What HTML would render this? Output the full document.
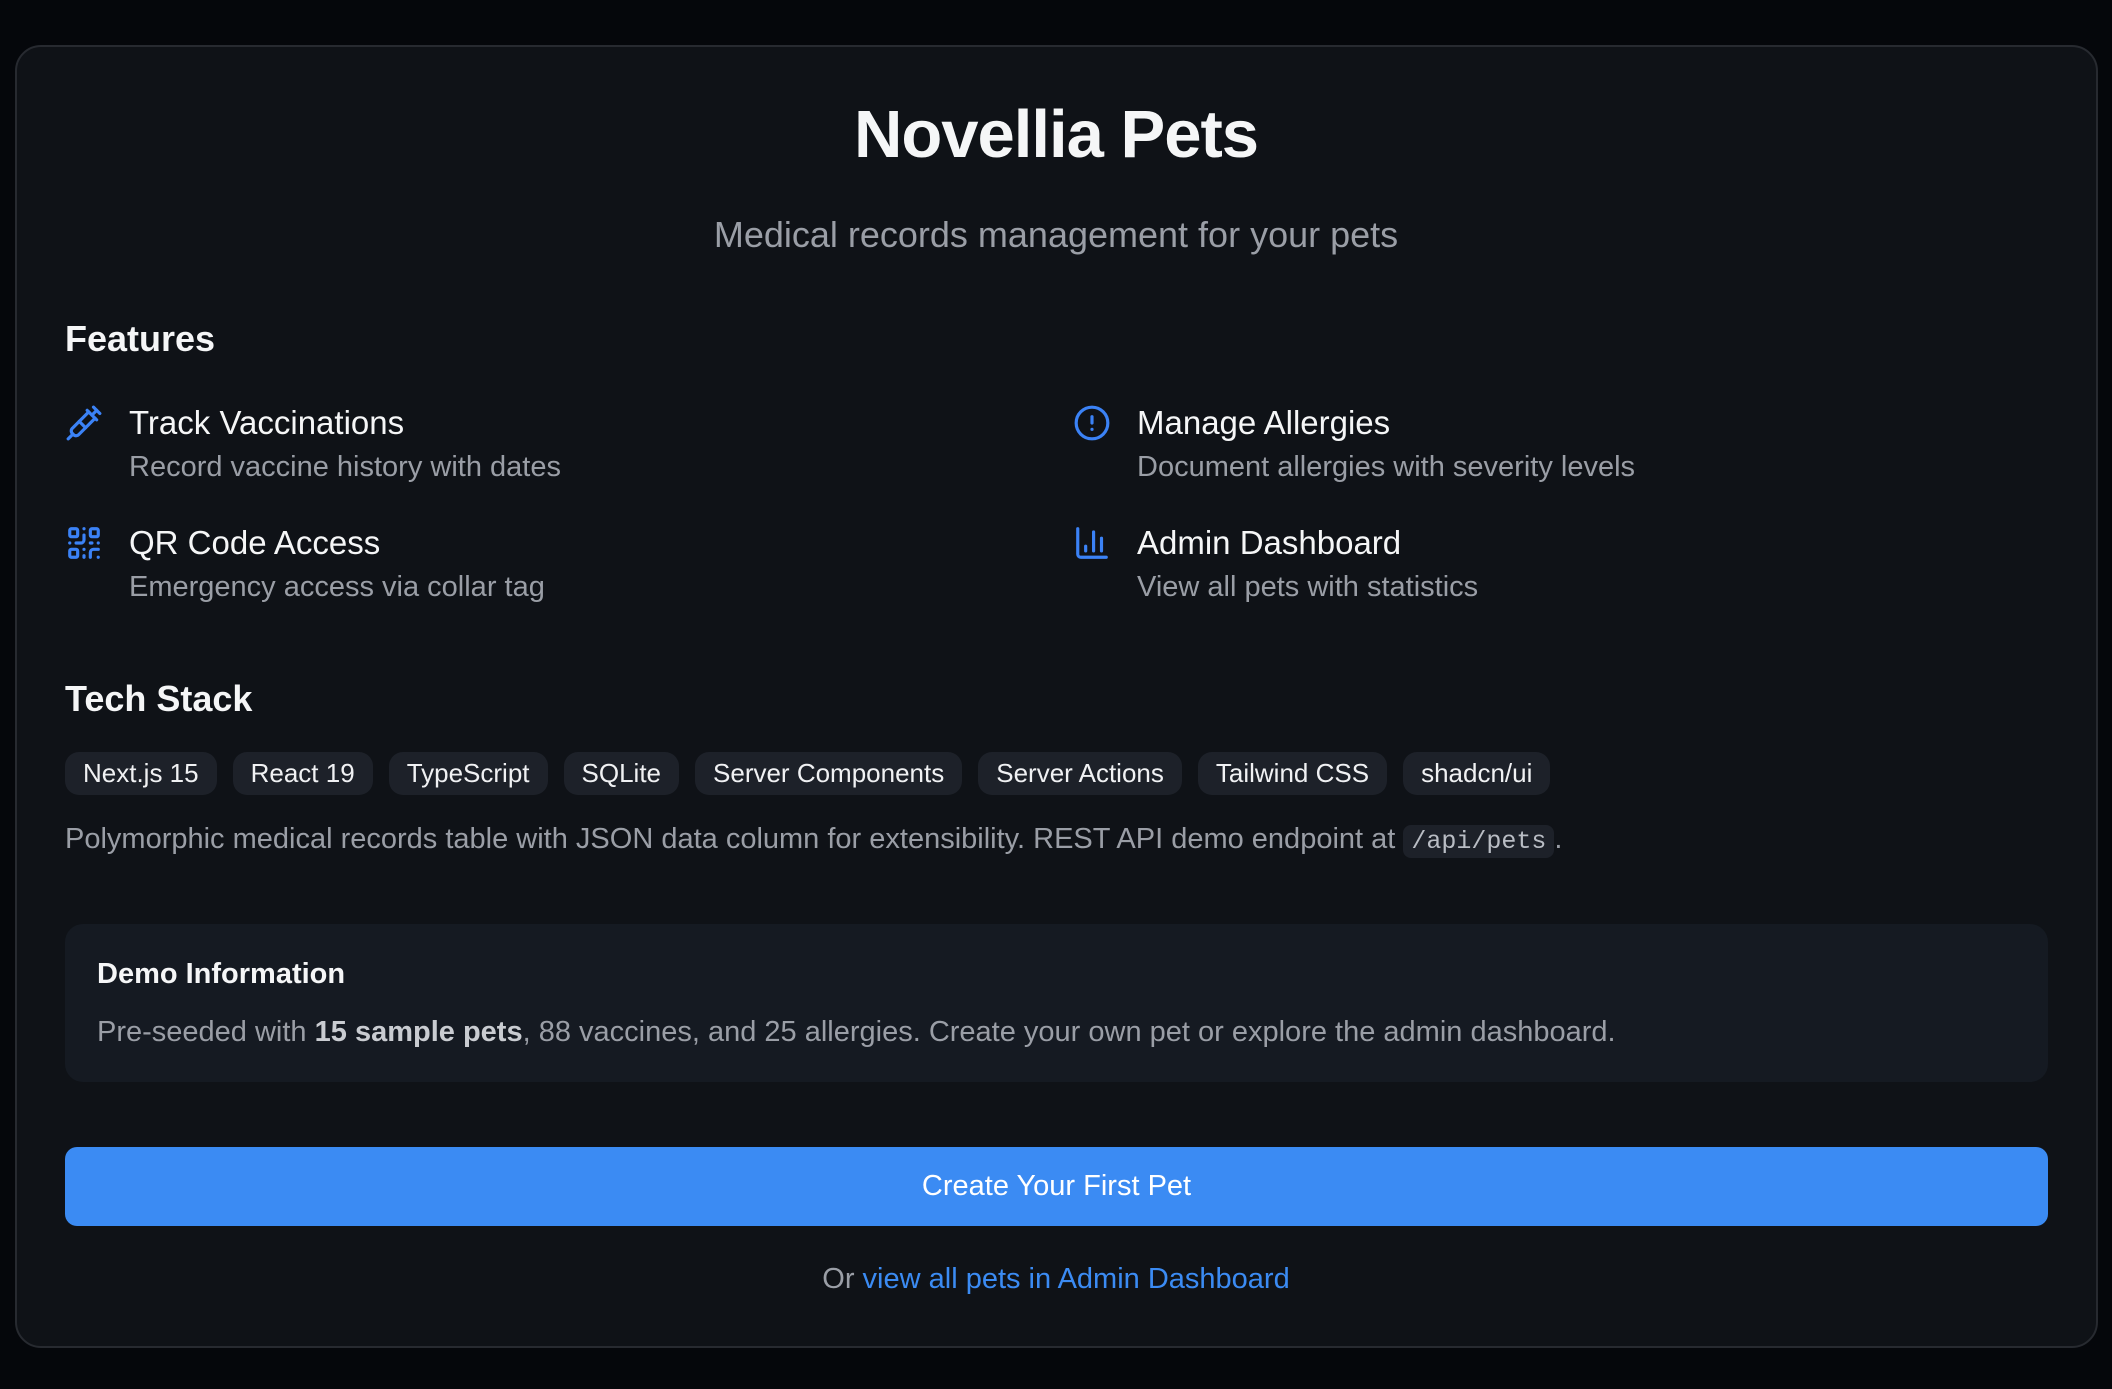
<!DOCTYPE html>
<html><head><meta charset="utf-8"><style>
*{margin:0;padding:0;box-sizing:border-box}
body{width:2112px;height:1389px;background:#05070b;font-family:"Liberation Sans",sans-serif;position:relative;overflow:hidden;color:#f5f6f7}
.card{position:absolute;left:15px;top:45px;width:2083px;height:1303px;background:#0f1217;border:2px solid #272a30;border-radius:26px}
.a{position:absolute;white-space:nowrap}
.c{left:0;width:2112px;text-align:center}
h1{font-size:67px;font-weight:700;letter-spacing:-1px}
.ft{font-size:33px;line-height:40px}
.fd{font-size:29px;line-height:36px;color:#9a9ea6}
.ic{position:absolute;width:38px;height:38px}
.badges{position:absolute;left:65px;top:752px;display:flex;gap:16px}
.b{height:43px;padding:0 18px;background:#1d2129;border-radius:14px;font-size:26px;line-height:43px;color:#f0f1f3}
code{font-family:"Liberation Mono",monospace;background:#1d2129;border-radius:8px;padding:2px 8px;font-size:25px;color:#b9bdc4}
</style></head><body>
<div class="card"></div>
<div class="a c" style="top:96px"><h1>Novellia Pets</h1></div>
<div class="a c" style="top:214px;font-size:36px;color:#9a9ea6">Medical records management for your pets</div>
<div class="a" style="left:65px;top:318px;font-size:36px;font-weight:600">Features</div>

<svg class="ic" style="left:65px;top:404px" viewBox="0 0 24 24" fill="none" stroke="#3b82f6" stroke-width="2" stroke-linecap="round" stroke-linejoin="round"><path d="m18 2 4 4"/><path d="m17 7 3-3"/><path d="M19 9 8.7 19.3c-1 1-2.5 1-3.4 0l-.6-.6c-1-1-1-2.5 0-3.4L15 5"/><path d="m9 11 4 4"/><path d="m5 19-3 3"/><path d="m14 4 6 6"/></svg>
<div class="a ft" style="left:129px;top:403px">Track Vaccinations</div>
<div class="a fd" style="left:129px;top:449px">Record vaccine history with dates</div>

<svg class="ic" style="left:1073px;top:404px" viewBox="0 0 24 24" fill="none" stroke="#3b82f6" stroke-width="2" stroke-linecap="round" stroke-linejoin="round"><circle cx="12" cy="12" r="10"/><line x1="12" x2="12" y1="8" y2="12"/><line x1="12" x2="12.01" y1="16" y2="16"/></svg>
<div class="a ft" style="left:1137px;top:403px">Manage Allergies</div>
<div class="a fd" style="left:1137px;top:449px">Document allergies with severity levels</div>

<svg class="ic" style="left:65px;top:524px" viewBox="0 0 24 24" fill="none" stroke="#3b82f6" stroke-width="2" stroke-linecap="round" stroke-linejoin="round"><rect width="5" height="5" x="3" y="3" rx="1"/><rect width="5" height="5" x="16" y="3" rx="1"/><rect width="5" height="5" x="3" y="16" rx="1"/><path d="M21 16h-3a2 2 0 0 0-2 2v3"/><path d="M21 21v.01"/><path d="M12 7v3a2 2 0 0 1-2 2H7"/><path d="M3 12h.01"/><path d="M12 3h.01"/><path d="M12 16v.01"/><path d="M16 12h1"/><path d="M21 12v.01"/><path d="M12 21v-1"/></svg>
<div class="a ft" style="left:129px;top:523px">QR Code Access</div>
<div class="a fd" style="left:129px;top:569px">Emergency access via collar tag</div>

<svg class="ic" style="left:1073px;top:524px" viewBox="0 0 24 24" fill="none" stroke="#3b82f6" stroke-width="2" stroke-linecap="round" stroke-linejoin="round"><path d="M3 3v16a2 2 0 0 0 2 2h16"/><path d="M18 17V9"/><path d="M13 17V5"/><path d="M8 17v-3"/></svg>
<div class="a ft" style="left:1137px;top:523px">Admin Dashboard</div>
<div class="a fd" style="left:1137px;top:569px">View all pets with statistics</div>

<div class="a" style="left:65px;top:678px;font-size:36px;font-weight:600">Tech Stack</div>
<div class="badges"><div class="b">Next.js 15</div><div class="b">React 19</div><div class="b">TypeScript</div><div class="b">SQLite</div><div class="b">Server Components</div><div class="b">Server Actions</div><div class="b">Tailwind CSS</div><div class="b">shadcn/ui</div></div>
<div class="a fd" style="left:65px;top:821px">Polymorphic medical records table with JSON data column for extensibility. REST API demo endpoint at <code>/api/pets</code>.</div>

<div class="a" style="left:65px;top:924px;width:1983px;height:158px;background:#151a22;border-radius:18px"></div>
<div class="a" style="left:97px;top:958px;font-size:29px;font-weight:600">Demo Information</div>
<div class="a fd" style="left:97px;top:1014px">Pre-seeded with <b style="color:#c9ccd1">15 sample pets</b>, 88 vaccines, and 25 allergies. Create your own pet or explore the admin dashboard.</div>

<div class="a" style="left:65px;top:1147px;width:1983px;height:79px;background:#3b8bf3;border-radius:12px;text-align:center;line-height:79px;font-size:29px;color:#fff">Create Your First Pet</div>
<div class="a c" style="top:1261px;font-size:29px;line-height:36px;color:#9a9ea6">Or <span style="color:#3b8bf3">view all pets in Admin Dashboard</span></div>
</body></html>
